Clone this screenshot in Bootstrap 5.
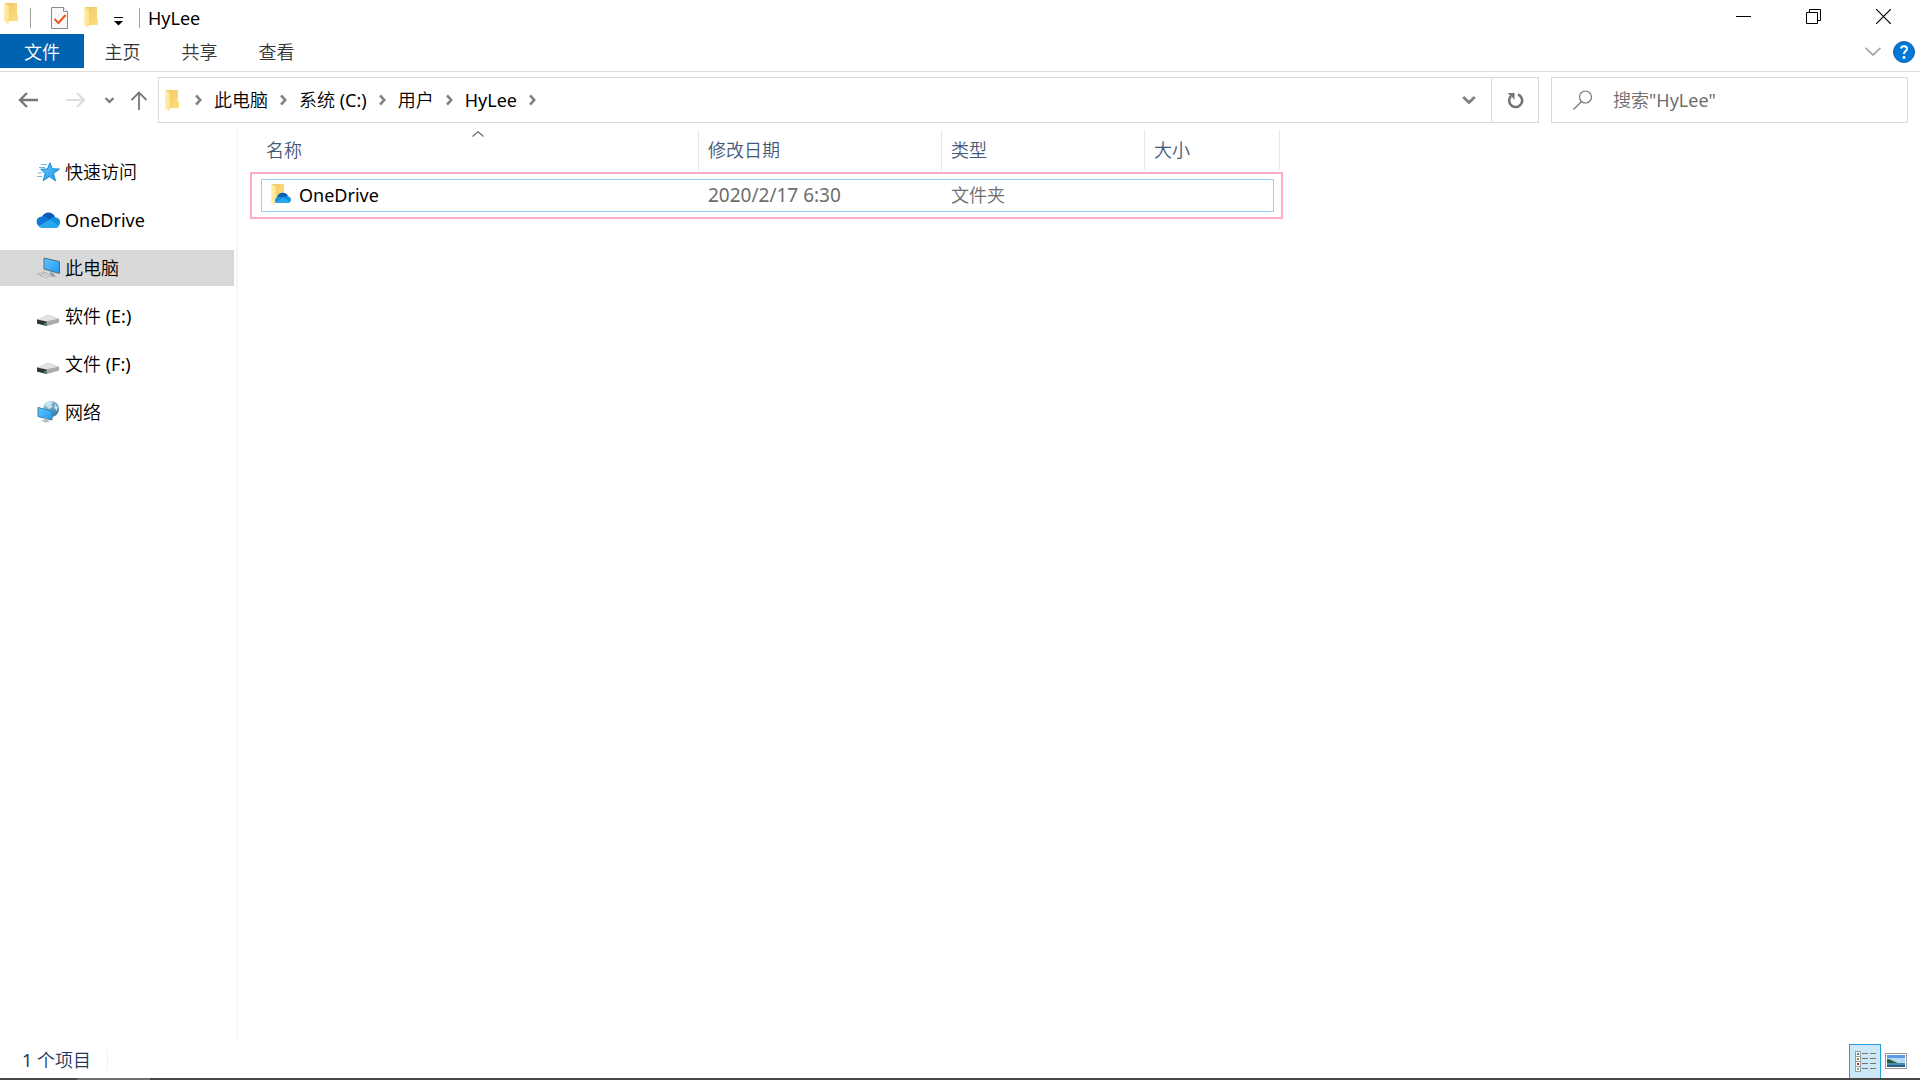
<!DOCTYPE html>
<html lang="zh-CN">
<head>
<meta charset="utf-8">
<meta name="viewport" content="width=device-width, initial-scale=1">
<title>HyLee</title>
<link href="https://cdn.jsdelivr.net/npm/bootstrap@5.3.0/dist/css/bootstrap.min.css" rel="stylesheet">
<style>
body{font-family:"Noto Sans","Noto Sans CJK SC DemiLight","Noto Sans CJK SC",sans-serif;font-size:18px;line-height:24px;color:#000;background:#fff;font-weight:400}
a{color:inherit;text-decoration:none}
button{border:0;background:none;padding:0;color:inherit}
svg{display:block;flex:none}
.titlebar{height:34px}
.quick{padding:0 0 7px 4px}
.vline{width:1px;height:20px;background:#a0a0a0}
.quick .vline:first-of-type{margin-left:12px}
.winbtn{width:70px;height:28px;display:flex;align-items:center;justify-content:center}
.winset{padding-right:2px}
.ribbon{height:38px;border-bottom:1px solid #dadbdc;color:#333}
.ribbon-tools{padding:0 5px 2px 0}
.tab-link{height:34px;width:77px;padding-top:1px;display:flex;align-items:center;justify-content:center}
.tab-file{width:84px;background:#0063b1;color:#fff}
.toolrow{padding:5px 12px 0 0}
.navset{width:158px;padding-left:18px;height:46px}
.boxed{height:46px;border:1px solid #d9d9d9}
.crumbs{gap:12px;padding-left:6px}
.drop-btn{width:44px;height:44px}
.reload-btn{width:47px;height:44px;border-left:1px solid #d9d9d9}
.find{width:357px;margin-left:12px;padding-left:21px}
.find input{border:0;outline:0;padding:0;background:none;color:#6d6d6d;min-width:0}
.find input::placeholder{color:#6d6d6d;opacity:1}
.content-row{padding-top:7px}
.side{width:238px;border-right:2px solid #f7f7f7;padding:24px 2px 0 0;gap:12px}
.side a{height:36px;padding-left:36px;gap:5px}
.side a.current{background:#d9d9d9}
.files{padding:0 0 0 12px}
.filetable{table-layout:fixed;width:1030px;border-collapse:separate;border-spacing:0}
.filetable th{font-weight:400;color:#44597a;height:42px;padding:0 0 2px 0;position:relative}
.filetable th div{height:40px;border-right:1px solid #e5e5e5;padding-left:9px;display:flex;align-items:center}
.filetable th:first-child div{padding-left:16px}
.sort{position:absolute;left:222px;top:1px}
.filetable td{height:47px;padding:0 0 2px 9px;color:#6d6d6d}
.filetable td:first-child{padding-left:21px;color:#000}
.filetable tbody tr{position:relative}
.filetable td:first-child::before{content:"";position:absolute;top:0;bottom:0;left:0;right:-3px;border:2px solid #ffaac8}
.filetable td:first-child::after{content:"";position:absolute;top:7px;bottom:7px;left:11px;right:6px;border:1px solid #99d1ff}
.filetable td.stamp{font-size:19px}
.status{height:36px;padding:0 13px 0 22px;color:#1e395b}
.view-on{width:32px;height:34px;background:#cce8f6;border:1px solid #26a0da;border-bottom:0}
.status .vline{background:#f0f0f0}
.edge{height:2px;background:#484848;padding-left:77px}
.edge div{width:73px;height:2px;background:#6e6e6e}
</style>
</head>
<body>
<svg width="0" height="0" class="position-absolute">
  <defs>
    <linearGradient id="fold" x1="0" x2="1" y1="0" y2="1"><stop offset="0" stop-color="#efca65"/><stop offset="1" stop-color="#ffdd80"/></linearGradient>
    <linearGradient id="flap" x1="0" x2="1"><stop offset="0" stop-color="#fff0b5"/><stop offset="1" stop-color="#ffe18b"/></linearGradient>
    <linearGradient id="scr" x1="0" x2="1" y1="0" y2="1"><stop offset="0" stop-color="#62c6ff"/><stop offset="1" stop-color="#2196f0"/></linearGradient>
    <linearGradient id="globe" x1="0" x2="1" y1="0" y2="1"><stop offset="0" stop-color="#b4dcec"/><stop offset="1" stop-color="#1c6791"/></linearGradient>
    <symbol id="folder" viewBox="0 0 14 21"><path d="M1 0h12v12h1v6H3z" fill="url(#fold)"/><path d="M0 0l5 3v16l-1 2-4-3z" fill="url(#flap)"/></symbol>
    <symbol id="chev" viewBox="0 0 7 12"><path d="M1 1.300l4.200 4.700L1 10.700" fill="none" stroke="#808080" stroke-width="2.600"/></symbol>
    <symbol id="cloud" viewBox="0 0 24 16"><path d="M6 5C8-1 17-1 19 5l-7 6z" fill="#0a5eb5"/><path d="M5 15C-1 14-1 5 6 4.500c3-.5 5 1.500 8 3L6 15z" fill="#0f78d4"/><path d="M14 7.500C16 5 18 5 19.500 5.200 26 6 25 15 20 15z" fill="#1490df"/><path d="M2.500 14L14 7.500l9 6.500c-1 1.500-2 2-4 2H6c-1.500 0-3-1-3.500-2z" fill="#28a8ea"/></symbol>
    <symbol id="drive" viewBox="0 0 24 12"><path d="M1 5.500L12 1l11 3.500v4L11 12 1 9.500z" fill="#a9abad"/><path d="M1 5.500L12 1l11 3.500L10 7.500z" fill="#dfe1e3"/><path d="M1 5.500l9.500 2V12L1 9.500z" fill="#353535"/><path d="M8 9.200l2 .4v1.300l-2-.5z" fill="#35c33b"/></symbol>
  </defs>
</svg>
<div class="d-flex flex-column vh-100">
  <header>
    <div class="titlebar d-flex justify-content-between">
      <div class="quick d-flex align-items-center">
        <svg width="14" height="21"><use href="#folder"/></svg>
        <span class="vline mt-2 me-3"></span>
        <button type="button" aria-label="属性" class="mt-2 ms-1"><svg width="17" height="22" viewBox="0 0 17 22"><path d="M.5.500h12l4 4v17H.5z" fill="#f6f8fa" stroke="#858b91"/><path d="M12.500.500v4h4" fill="#fff" stroke="#858b91"/><path d="M3.500 12l4 4 7-8" fill="none" stroke="#f2541b" stroke-width="2"/></svg></button>
        <button type="button" aria-label="新建文件夹" class="mt-2 ms-3"><svg width="14" height="21"><use href="#folder"/></svg></button>
        <button type="button" aria-label="自定义快速访问工具栏" class="mt-3 ms-3"><svg width="9" height="9" viewBox="0 0 9 9"><path d="M0 .5h9" stroke="#000"/><path d="M0 4h9L4.500 8.500z"/></svg></button>
        <span class="vline mt-2 ms-3 me-2"></span>
        <span class="mt-2">HyLee</span>
      </div>
      <div class="winset d-flex">
        <button type="button" class="winbtn" aria-label="最小化"><svg width="15" height="16"><path d="M0 10.500h15" stroke="#000"/></svg></button>
        <button type="button" class="winbtn" aria-label="还原"><svg width="15" height="15" viewBox="0 0 15 15" class="mt-1" fill="none" stroke="#000"><path d="M.5 3.500h11v11H.5zM3.500 3.500v-3h11v11h-3"/></svg></button>
        <button type="button" class="winbtn" aria-label="关闭"><svg width="15" height="15" viewBox="0 0 15 15" class="mt-1" stroke="#000" stroke-width="1.200"><path d="M0 0l15 15M15 0L0 15"/></svg></button>
      </div>
    </div>
    <div class="ribbon d-flex justify-content-between">
      <nav class="d-flex">
        <a href="#" class="tab-link tab-file">文件</a>
        <a href="#" class="tab-link">主页</a>
        <a href="#" class="tab-link">共享</a>
        <a href="#" class="tab-link">查看</a>
      </nav>
      <div class="ribbon-tools d-flex align-items-center gap-2">
        <button type="button" aria-label="展开功能区" class="me-1"><svg width="16" height="9" viewBox="0 0 16 9"><path d="M.5.800L8 8 15.500.800" fill="none" stroke="#a9a9a9" stroke-width="1.800"/></svg></button>
        <button type="button" aria-label="帮助"><svg width="22" height="22" viewBox="0 0 22 22"><circle cx="11" cy="11" r="10.500" fill="#0078d7" stroke="#1264ab"/><path d="M8 7.500c.5-3 6-3 6 .3 0 2.200-3 2.200-3 5.200" fill="none" stroke="#fff" stroke-width="2"/><circle cx="11" cy="16.500" r="1.400" fill="#fff"/></svg></button>
      </div>
    </div>
    <div class="toolrow d-flex">
      <div class="navset d-flex align-items-center">
        <button type="button" aria-label="后退"><svg width="20" height="16" viewBox="0 0 20 16"><path d="M20 8H2M9 1L2 8l7 7" fill="none" stroke="#777" stroke-width="2.400"/></svg></button>
        <button type="button" aria-label="前进" class="ms-4 ps-1"><svg width="19" height="16" viewBox="0 0 19 16"><path d="M0 8h18M11 1l7 7-7 7" fill="none" stroke="#ddd" stroke-width="2"/></svg></button>
        <button type="button" aria-label="最近浏览的位置" class="ms-3 ps-1"><svg width="9" height="7" viewBox="0 0 9 7"><path d="M.5 1l4 4 4-4" fill="none" stroke="#777" stroke-width="2.200"/></svg></button>
        <button type="button" aria-label="上移" class="ms-3"><svg width="18" height="19" viewBox="0 0 18 19"><path d="M9 19V1.500M1.500 9L9 1.500 16.500 9" fill="none" stroke="#777" stroke-width="1.800"/></svg></button>
      </div>
      <div class="boxed d-flex flex-grow-1">
        <nav class="crumbs d-flex align-items-center flex-grow-1">
          <svg width="14" height="21" class="me-1"><use href="#folder"/></svg>
          <svg width="7" height="12"><use href="#chev"/></svg><a href="#">此电脑</a>
          <svg width="7" height="12"><use href="#chev"/></svg><a href="#">系统 (C:)</a>
          <svg width="7" height="12"><use href="#chev"/></svg><a href="#">用户</a>
          <svg width="7" height="12"><use href="#chev"/></svg><a href="#">HyLee</a>
          <svg width="7" height="12"><use href="#chev"/></svg>
        </nav>
        <button type="button" class="drop-btn d-flex align-items-center justify-content-center" aria-label="以前的位置"><svg width="14" height="10" viewBox="0 0 14 10"><path d="M1.200 2L7 7.500 12.800 2" fill="none" stroke="#808080" stroke-width="2.800"/></svg></button>
        <button type="button" class="reload-btn d-flex align-items-center justify-content-center" aria-label="刷新"><svg width="17" height="17" viewBox="0 0 17 17"><path d="M11 2.500A6.500 6.500 0 1 1 4 4" fill="none" stroke="#757575" stroke-width="2.600"/><path d="M.5 1h7v7L5.300 5.300z" fill="#757575"/></svg></button>
      </div>
      <div class="boxed find d-flex align-items-center">
        <label for="q" aria-label="搜索" class="me-3"><svg width="20" height="20" viewBox="0 0 20 20" fill="none" stroke="#777" stroke-width="1.200"><circle cx="12.500" cy="7" r="6"/><path d="M8.500 11.500L.5 19.500"/></svg></label>
        <input id="q" type="text" class="flex-grow-1 ms-1" placeholder='搜索"HyLee"'>
      </div>
    </div>
  </header>
  <main class="content-row d-flex flex-grow-1">
    <nav class="side d-flex flex-column">
      <a href="#" class="d-flex align-items-center"><svg width="24" height="20" viewBox="0 0 24 20"><path d="M14 .8l2.200 6 7.300.2-6 4.400 2 7.400-6-4.200-6.300 4 2-7-4.500-4.400 6.700-.2z" fill="url(#scr)" stroke="#1b86d2"/><path d="M5 2.500h6M3 5.500h6M2 11h4M1 14.500h5" stroke="#6fb9ea" fill="none"/></svg>快速访问</a>
      <a href="#" class="d-flex align-items-center"><svg width="24" height="16"><use href="#cloud"/></svg>OneDrive</a>
      <a href="#" class="d-flex align-items-center current"><svg width="24" height="22" viewBox="0 0 24 22"><path d="M8 1l15.500 3.500v12L8 12z" fill="url(#scr)" stroke="#4f6f88"/><path d="M14 15l4 1v2l3 1-4 1-5-2 2-1z" fill="#9a9fa4"/><path d="M1 17l7-2 8 3-6 3z" fill="#e8eaec" stroke="#a5a9ad" stroke-width=".8"/><path d="M4 17l8 2.500M6 16l8 2.500M4 18.500l6-3" stroke="#a5a9ad" stroke-width=".7"/></svg>此电脑</a>
      <a href="#" class="d-flex align-items-center"><svg width="24" height="12" class="mt-2"><use href="#drive"/></svg>软件 (E:)</a>
      <a href="#" class="d-flex align-items-center"><svg width="24" height="12" class="mt-2"><use href="#drive"/></svg>文件 (F:)</a>
      <a href="#" class="d-flex align-items-center"><svg width="24" height="22" viewBox="0 0 24 22"><circle cx="15" cy="8" r="8" fill="url(#globe)"/><path d="M9 4c2-4 6-4 8-3l-2 3 2 2-4 2-2-2zM19 3l3 3-1 4-3-3z" fill="#dff1f7" opacity=".75"/><path d="M2 6.500l14 3.500v9L2 15.500z" fill="url(#scr)" stroke="#3f80a8"/><path d="M8 17l4 1v1.500l2 .8-4 1.500-5-2 3-.8z" fill="#b6bdc2"/></svg>网络</a>
    </nav>
    <section class="files flex-grow-1">
      <table class="filetable">
        <colgroup><col style="width:449px"><col style="width:243px"><col style="width:203px"><col style="width:135px"></colgroup>
        <thead><tr>
          <th scope="col"><div>名称</div><svg class="sort" width="12" height="6" viewBox="0 0 12 6"><path d="M.5 5.500L6 .700l5.500 4.800" fill="none" stroke="#6d6d6d" stroke-width="1.200"/></svg></th>
          <th scope="col"><div>修改日期</div></th><th scope="col"><div>类型</div></th><th scope="col"><div>大小</div></th>
        </tr></thead>
        <tbody><tr>
          <td><div class="d-flex align-items-center"><svg width="20" height="21" viewBox="0 0 20 21" class="me-1"><path d="M1 0h12v18H3z" fill="url(#fold)"/><path d="M0 0l5 3v16l-1 2-4-3z" fill="url(#flap)"/><path d="M6 13c1-5 9-6 11-1l-7 5z" fill="#0a5eb5"/><path d="M4 17c-.5-3 3-5 6-4l7-.7c4 .5 4 6 0 6.700H7c-2 0-3-.5-3-2z" fill="#1490df"/><path d="M5 18l7-4 7 4c-1 1-2 1-3 1H7z" fill="#28a8ea"/></svg><span class="ps-1">OneDrive</span></div></td>
          <td class="stamp">2020/2/17 6:30</td><td>文件夹</td><td></td>
        </tr></tbody>
      </table>
    </section>
  </main>
  <footer>
    <div class="status d-flex justify-content-between align-items-end">
      <div class="d-flex align-items-center h-100">1 个项目<span class="vline ms-3"></span></div>
      <div class="d-flex align-items-center gap-1">
        <button type="button" class="view-on d-flex align-items-center justify-content-center" aria-label="详细信息"><svg width="21" height="21" viewBox="0 0 21 21"><path d="M.5.500h5v5h-5zM.5 5.500h5v5h-5zM.5 10.500h5v5h-5zM.5 15.500h5v5h-5z" fill="#fff" stroke="#999"/><path d="M2 2h2v2H2z" fill="#2d84a8"/><path d="M2 7h2v2H2z" fill="#6d8a3f"/><path d="M2 12h2v2H2z" fill="#b52b1f"/><path d="M2 17h2v2H2z" fill="#69a79c"/><path d="M7 2.500h6M15 2.500h6M7 7.500h6M15 7.500h6M7 12.500h6M15 12.500h6M7 17.500h6M15 17.500h6" stroke="#777"/></svg></button>
        <button type="button" aria-label="大缩略图"><svg width="22" height="16" viewBox="0 0 22 16"><path d="M.5.500h21v15H.5z" fill="#fff" stroke="#999"/><path d="M2 2h18v12H2z" fill="#b7d8f3"/><path d="M2 2h18v3H2z" fill="#5b9bea"/><path d="M2 6c4 0 7 3 11 4H2z" fill="#28603f"/><path d="M2 10h18v4H2z" fill="#4f8bb0"/><path d="M2 12h18v2H2z" fill="#276184"/></svg></button>
      </div>
    </div>
    <div class="edge"><div></div></div>
  </footer>
</div>
<script src="https://cdn.jsdelivr.net/npm/bootstrap@5.3.0/dist/js/bootstrap.bundle.min.js"></script>
</body>
</html>
